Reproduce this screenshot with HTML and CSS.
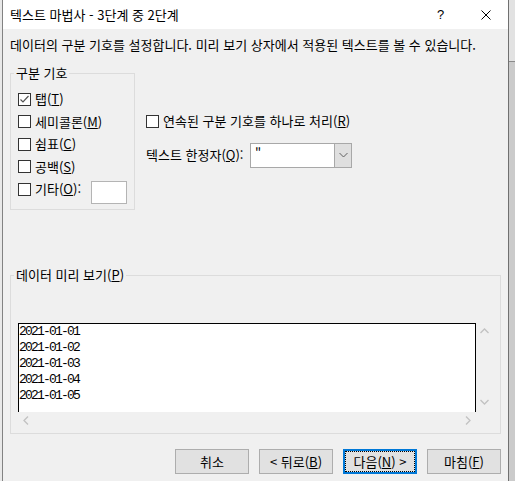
FILE: index.html
```html
<!DOCTYPE html>
<html lang="ko">
<head>
<meta charset="utf-8">
<title>텍스트 마법사</title>
<link rel="stylesheet" href="styles.css">
</head>
<body>
<div class="edge-left"></div>
<div class="window">
  <div class="titlebar">
    <div class="title">텍스트 마법사 - 3단계 중 2단계</div>
    <div class="tb-btn help">?</div>
    <div class="tb-btn close">
      <svg width="10" height="10" viewBox="0 0 10 10"><path d="M0.5 0.5L9.5 9.5M9.5 0.5L0.5 9.5" stroke="#000" stroke-width="1" fill="none"/></svg>
    </div>
  </div>
  <div class="content">
    <div class="desc">데이터의 구분 기호를 설정합니다. 미리 보기 상자에서 적용된 텍스트를 볼 수 있습니다.</div>
    <div class="top-row">
      <fieldset class="group1">
        <legend>구분 기호</legend>
        <div class="opt"><span class="cb"><svg width="11" height="11" viewBox="0 0 11 11"><path d="M1.5 5.5L4 8L9.5 2" stroke="#555" stroke-width="1.2" fill="none"/></svg></span><span>탭(<u>T</u>)</span></div>
        <div class="opt"><span class="cb"></span><span>세미콜론(<u>M</u>)</span></div>
        <div class="opt"><span class="cb"></span><span>쉼표(<u>C</u>)</span></div>
        <div class="opt"><span class="cb"></span><span>공백(<u>S</u>)</span></div>
        <div class="opt"><span class="cb"></span><span class="other-label">기타(<u>O</u>):</span><span class="textbox"></span></div>
      </fieldset>
      <div class="right">
        <div class="opt"><span class="cb"></span><span>연속된 구분 기호를 하나로 처리(<u>R</u>)</span></div>
        <div class="qualifier">
          <span class="q-label">텍스트 한정자(<u>Q</u>):</span>
          <div class="combo">
            <span class="combo-val">"</span>
            <span class="combo-btn"><svg width="9" height="6" viewBox="0 0 9 6"><path d="M0.5 1L4.5 5L8.5 1" stroke="#606060" stroke-width="1" fill="none"/></svg></span>
          </div>
        </div>
      </div>
    </div>
    <fieldset class="group2">
      <legend>데이터 미리 보기(<u>P</u>)</legend>
      <div class="preview">
        <div class="pv-text">
          <div>2021-01-01</div>
          <div>2021-01-02</div>
          <div>2021-01-03</div>
          <div>2021-01-04</div>
          <div>2021-01-05</div>
        </div>
        <div class="vscroll">
          <svg width="9" height="6" viewBox="0 0 9 6"><path d="M0.5 5L4.5 1L8.5 5" stroke="#c2c2c2" stroke-width="1.3" fill="none"/></svg>
          <svg width="9" height="6" viewBox="0 0 9 6"><path d="M0.5 1L4.5 5L8.5 1" stroke="#c2c2c2" stroke-width="1.3" fill="none"/></svg>
        </div>
        <div class="hscroll">
          <svg width="6" height="9" viewBox="0 0 6 9"><path d="M5 0.5L1 4.5L5 8.5" stroke="#c2c2c2" stroke-width="1.3" fill="none"/></svg>
          <svg width="6" height="9" viewBox="0 0 6 9"><path d="M1 0.5L5 4.5L1 8.5" stroke="#c2c2c2" stroke-width="1.3" fill="none"/></svg>
        </div>
        <div class="corner"></div>
      </div>
    </fieldset>
    <div class="buttons">
      <div class="btn">취소</div>
      <div class="btn">&lt; 뒤로(<u>B</u>)</div>
      <div class="btn default"><span class="focus">다음(<u>N</u>) &gt;</span></div>
      <div class="btn">마침(<u>F</u>)</div>
    </div>
  </div>
</div>
<div class="edge-right"></div>
</body>
</html>
```
FILE: styles.css
```css
html, body {
  margin: 0;
  padding: 0;
}
body {
  width: 515px;
  height: 481px;
  overflow: hidden;
  display: flex;
  background: #d6d6d6;
  font-family: "Noto Sans CJK KR", "Noto Sans", sans-serif;
  font-size: 13px;
  line-height: 16px;
  color: #000;
}
u { text-decoration: underline; text-underline-offset: 1px; }

.edge-left {
  width: 2px;
  background: #e8e8e8;
  flex: none;
}
.edge-right {
  width: 6px;
  flex: none;
  background: linear-gradient(to bottom, #e2e2e2 0 61px, #8a8a8a 61px 62px, #cbcbcb 62px);
}
.window {
  width: 505px;
  flex: none;
  border-left: 1px solid #828282;
  border-right: 1px solid #707070;
  background: #f0f0f0;
  display: flex;
  flex-direction: column;
}

.titlebar {
  height: 29px;
  background: #fff;
  display: flex;
  align-items: center;
  padding-left: 7px;
}
.title { flex: 1; }
.tb-btn {
  width: 45px;
  height: 29px;
  display: flex;
  align-items: center;
  justify-content: center;
}
.help { font-size: 13px; font-family: "Liberation Sans", sans-serif; }

.content {
  padding: 8px 7px 0;
}
.desc { height: 16px; white-space: nowrap; }

.top-row {
  display: flex;
  align-items: flex-start;
  margin-top: 12px;
}
fieldset {
  margin: 0;
  min-width: 0;
  border: 1px solid #dcdcdc;
  box-sizing: border-box;
}
legend {
  padding: 0 2px;
  line-height: 16px;
}
.group1 {
  width: 125px;
  padding: 7px 0 8px 3px;
}
.group1 .opt { margin-left: 4px; }

.opt {
  height: 22.5px;
  display: flex;
  align-items: center;
  white-space: nowrap;
}
.cb {
  width: 13px;
  height: 13px;
  box-sizing: border-box;
  border: 1px solid #333;
  background: #fff;
  margin-right: 4px;
  flex: none;
  display: flex;
  align-items: center;
  justify-content: center;
}
.other-label { width: 56px; }
.textbox {
  width: 36px;
  height: 23px;
  box-sizing: border-box;
  border: 1px solid #b4b4b4;
  background: #fff;
  margin-top: 6px;
}

.right {
  margin-left: 11px;
  padding-top: 45px;
}
.qualifier {
  display: flex;
  align-items: center;
  height: 25px;
  margin-top: 10px;
}
.q-label { width: 104px; white-space: nowrap; }
.combo {
  width: 102px;
  height: 25px;
  box-sizing: border-box;
  border: 1px solid #a8a8a8;
  background: #fff;
  display: flex;
}
.combo-val {
  flex: 1;
  padding-left: 4px;
  line-height: 20px;
}
.combo-btn {
  width: 16px;
  background: #dfdfdf;
  border-left: 1px solid #a8a8a8;
  display: flex;
  align-items: center;
  justify-content: center;
}

.group2 {
  margin-top: 57.5px;
  padding: 40px 6px 4px 3px;
}
.preview {
  margin-left: 4px;
  display: grid;
  grid-template-columns: 458px 17px;
  grid-template-rows: 89px 17px;
}
.pv-text {
  background: #fff;
  border: 1px solid #000;
  border-bottom: none;
  font-family: "Liberation Mono", monospace;
  font-size: 13px;
  letter-spacing: -1.8px;
  line-height: 16px;
  overflow: hidden;
}
.vscroll {
  display: flex;
  flex-direction: column;
  align-items: center;
  justify-content: space-between;
  padding: 5px 0 7px;
}
.hscroll {
  display: flex;
  align-items: center;
  justify-content: space-between;
  padding: 0 5px 0 5px;
}

.buttons {
  display: flex;
  justify-content: flex-end;
  gap: 10px;
  margin-top: 15px;
}
.btn {
  width: 74px;
  height: 25px;
  box-sizing: border-box;
  border: 1px solid #adadad;
  background: #e1e1e1;
  display: flex;
  align-items: center;
  justify-content: center;
  white-space: nowrap;
}
.btn.default {
  border: 2px solid #0078d7;
  align-items: stretch;
}
.focus {
  flex: 1;
  border: 1px dotted #000;
  display: flex;
  align-items: center;
  justify-content: center;
}
```
